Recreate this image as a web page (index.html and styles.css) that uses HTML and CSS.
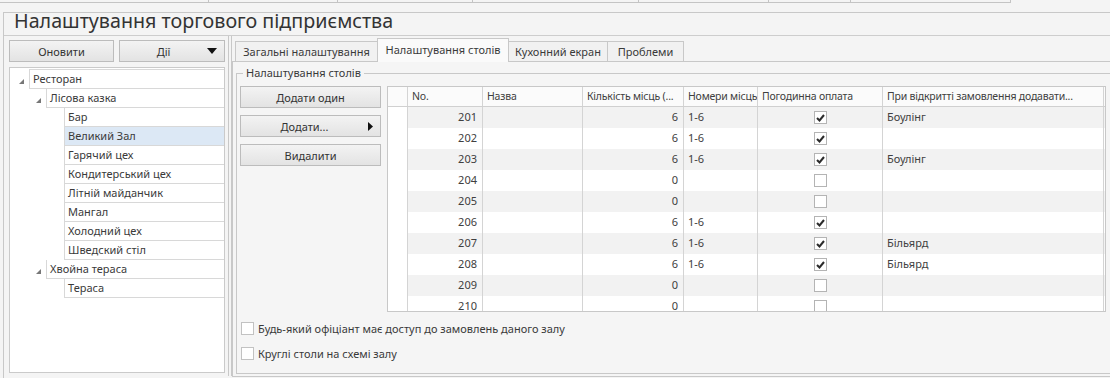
FILE: index.html
```html
<!DOCTYPE html>
<html lang="uk">
<head>
  <meta charset="UTF-8">
  <title>Налаштування торгового підприємства</title>
  <link rel="stylesheet" href="styles.css">
</head>
<body>
  <!-- вкладки вікон зверху (обрізані) -->
  <div class="strip">
    <span></span><span></span><span></span><span></span><span></span><span></span><span></span>
  </div>

  <div class="window">
    <div class="title">Налаштування торгового підприємства</div>

    <div class="main">
      <!-- Ліва панель: дерево залів -->
      <div class="side">
        <div class="side-buttons">
          <div class="btn btn-refresh">Оновити</div>
          <div class="btn btn-menu btn-actions">
            <span class="btn-label">Дії</span>
            <svg width="10" height="6" viewBox="0 0 10 6"><polygon points="0,0 10,0 5,6" fill="#111"/></svg>
          </div>
        </div>

        <div class="tree">
          <div class="node lvl0 first">
            <span class="toggle"><svg width="5" height="5" viewBox="0 0 5 5"><polygon points="5,0 5,5 0,5" fill="#777"/></svg></span>
            <div class="cell">Ресторан</div>
          </div>
          <div class="node lvl1">
            <span class="toggle"><svg width="5" height="5" viewBox="0 0 5 5"><polygon points="5,0 5,5 0,5" fill="#777"/></svg></span>
            <div class="cell">Лісова казка</div>
          </div>
          <div class="node lvl2"><div class="cell">Бар</div></div>
          <div class="node lvl2 sel"><div class="cell">Великий Зал</div></div>
          <div class="node lvl2"><div class="cell">Гарячий цех</div></div>
          <div class="node lvl2"><div class="cell">Кондитерський цех</div></div>
          <div class="node lvl2"><div class="cell">Літній майданчик</div></div>
          <div class="node lvl2"><div class="cell">Мангал</div></div>
          <div class="node lvl2"><div class="cell">Холодний цех</div></div>
          <div class="node lvl2"><div class="cell">Шведский стіл</div></div>
          <div class="node lvl1">
            <span class="toggle"><svg width="5" height="5" viewBox="0 0 5 5"><polygon points="5,0 5,5 0,5" fill="#777"/></svg></span>
            <div class="cell">Хвойна тераса</div>
          </div>
          <div class="node lvl2"><div class="cell">Тераса</div></div>
        </div>
      </div>

      <div class="splitter"></div>

      <!-- Права панель: вкладки -->
      <div class="content">
        <div class="tabs">
          <div class="tab tab-general">Загальні налаштування</div>
          <div class="tab tab-tables active">Налаштування столів</div>
          <div class="tab tab-kitchen">Кухонний екран</div>
          <div class="tab tab-problems">Проблеми</div>
        </div>

        <div class="tabpage">
          <fieldset class="group">
            <legend>Налаштування столів</legend>

            <div class="group-body">
              <div class="actions">
                <div class="btn">Додати один</div>
                <div class="btn btn-menu">
                  <span class="btn-label">Додати...</span>
                  <svg width="5" height="9" viewBox="0 0 5 9"><polygon points="0,0 5,4.5 0,9" fill="#111"/></svg>
                </div>
                <div class="btn">Видалити</div>
              </div>

              <div class="grid" id="grid">
                <div class="row head">
                  <div></div>
                  <div>No.</div>
                  <div>Назва</div>
                  <div>Кількість місць (...</div>
                  <div>Номери місць</div>
                  <div>Погодинна оплата</div>
                  <div>При відкритті замовлення додавати...</div>
                  <div></div>
                </div>
              </div>
            </div>

            <div class="options">
              <label class="option"><span class="box"></span>Будь-який офіціант має доступ до замовлень даного залу</label>
              <label class="option"><span class="box"></span>Круглі столи на схемі залу</label>
            </div>
          </fieldset>
        </div>
      </div>
    </div>
  </div>

  <script>
    // Дані столів
    const tables = [
      { no: 201, seats: 6, nums: '1-6', hourly: true,  add: 'Боулінг' },
      { no: 202, seats: 6, nums: '1-6', hourly: true,  add: '' },
      { no: 203, seats: 6, nums: '1-6', hourly: true,  add: 'Боулінг' },
      { no: 204, seats: 0, nums: '',    hourly: false, add: '' },
      { no: 205, seats: 0, nums: '',    hourly: false, add: '' },
      { no: 206, seats: 6, nums: '1-6', hourly: true,  add: '' },
      { no: 207, seats: 6, nums: '1-6', hourly: true,  add: 'Більярд' },
      { no: 208, seats: 6, nums: '1-6', hourly: true,  add: 'Більярд' },
      { no: 209, seats: 0, nums: '',    hourly: false, add: '' },
      { no: 210, seats: 0, nums: '',    hourly: false, add: '' }
    ];

    const checkSvg = '<svg width="9" height="8" viewBox="0 0 9 8"><polyline points="1,4 3.5,6.5 8,1" fill="none" stroke="#2b2b2b" stroke-width="2"/></svg>';

    const grid = document.getElementById('grid');
    tables.forEach(t => {
      const row = document.createElement('div');
      row.className = 'row';
      row.innerHTML =
        '<div></div>' +
        '<div class="num">' + t.no + '</div>' +
        '<div></div>' +
        '<div class="num">' + t.seats + '</div>' +
        '<div>' + t.nums + '</div>' +
        '<div class="chk"><span class="box">' + (t.hourly ? checkSvg : '') + '</span></div>' +
        '<div>' + t.add + '</div>' +
        '<div></div>';
      grid.appendChild(row);
    });
  </script>
</body>
</html>
```

FILE: styles.css
```css
* {
  box-sizing: border-box;
}

body {
  margin: 0;
  width: 1110px;
  height: 378px;
  overflow: hidden;
  background: #f4f4f4;
  font-family: 'Noto Sans', Tahoma, sans-serif;
  font-size: 11px;
  color: #3a3a3a;
}

.strip {
  display: grid;
  grid-template-columns: 209px 129px 135px 166px 130px 82px 160px;
  width: 1011px;
  height: 3px;
  border-bottom: 1px solid #c4c4c4;
}

.strip span {
  border-right: 1px solid #c4c4c4;
}

.window {
  margin: 9px 0 0 3px;
  width: 1112px;
  height: 370px;
  border-left: 1px solid #c8c8c8;
  border-top: 1px solid #c8c8c8;
}

.title {
  height: 23px;
  padding-left: 10px;
  border-bottom: 1px solid #cdcdcd;
  font-family: 'Noto Sans', sans-serif;
  font-size: 19.7px;
  line-height: 15px;
  color: #333;
  white-space: nowrap;
}

.main {
  display: flex;
  height: 340px;
}

/* ---- ліва панель ---- */

.side {
  width: 225px;
  flex: none;
  padding: 4px 3px 0 5px;
  border-right: 1px solid #c8c8c8;
}

.side-buttons {
  display: flex;
  gap: 5px;
}

.btn {
  display: flex;
  align-items: center;
  justify-content: center;
  height: 22px;
  border: 1px solid #bcbcbc;
  background: linear-gradient(#f3f3f3, #e3e3e3);
  color: #333;
  white-space: nowrap;
}

.btn-refresh {
  width: 105px;
}

.btn-actions {
  width: 106px;
}

.btn-menu {
  padding-right: 7px;
}

.btn-label {
  flex: 1;
  text-align: center;
}

.tree {
  margin-top: 5px;
  height: 306px;
  padding-top: 1px;
  border: 1px solid #cacaca;
  background: #fff;
}

.node {
  display: flex;
  height: 19px;
}

.node.first {
  height: 20px;
}

.node .cell {
  flex: 1;
  padding-left: 3px;
  border-left: 1px solid #d8d8d8;
  border-bottom: 1px solid #d8d8d8;
  line-height: 18px;
  white-space: nowrap;
}

.node.first .cell {
  border-top: 1px solid #d8d8d8;
}

.node.sel .cell {
  background: #dce8f5;
}

.toggle {
  display: flex;
  align-items: center;
  width: 10px;
  padding-top: 4px;
}

.lvl0 {
  padding-left: 9px;
}

.lvl1 {
  padding-left: 26px;
}

.lvl2 {
  padding-left: 54px;
}

.splitter {
  width: 3px;
  flex: none;
  border-right: 1px solid #c8c8c8;
}

/* ---- права панель ---- */

.content {
  flex: 1;
}

.tabs {
  display: flex;
  align-items: flex-end;
  height: 25px;
  padding-left: 3px;
}

.tab {
  height: 20px;
  border: 1px solid #c8c8c8;
  border-bottom: none;
  background: #f1f1f1;
  text-align: center;
  line-height: 19px;
  white-space: nowrap;
}

.tab + .tab {
  margin-left: -1px;
}

.tab.active {
  position: relative;
  height: 24px;
  margin-bottom: -1px;
  background: #fafafa;
  line-height: 21px;
}

.tab-general {
  width: 143px;
}

.tab-tables {
  width: 132px;
}

.tab-kitchen {
  width: 100px;
}

.tab-problems {
  width: 77px;
}

.tabpage {
  height: 316px;
  padding: 4px 0 0 3px;
  border: 1px solid #c8c8c8;
  background: #f5f5f5;
}

.group {
  margin: 0;
  min-width: 0;
  height: 308px;
  padding: 6px 0 0 3px;
  border: 1px solid #c8c8c8;
}

.group legend {
  margin-left: 3px;
  padding: 0 3px;
  line-height: 14px;
}

.group-body {
  display: flex;
  gap: 6px;
}

.actions {
  display: flex;
  flex-direction: column;
  gap: 7px;
  width: 141px;
}

.grid {
  width: 719px;
  height: 226px;
  overflow: hidden;
  border: 1px solid #c8c8c8;
  background: #fff;
  color: #404040;
}

.row {
  display: grid;
  grid-template-columns: 19px 75px 100px 101px 74px 125px 221px 1fr;
  height: 21px;
}

.row > div {
  padding: 4px 4px 0;
  line-height: 11px;
  white-space: nowrap;
  overflow: hidden;
}

.row > div + div {
  border-left: 1px solid #d4d4d4;
}

.row.head {
  height: 20px;
  border-bottom: 1px solid #d0d0d0;
  background: #fbfbfb;
  font-size: 10.5px;
  letter-spacing: -0.2px;
}

.row.head > div {
  padding-top: 0;
  line-height: 19px;
}

.row:nth-child(even) > div + div {
  background: #f2f2f2;
}

.row .num {
  text-align: right;
  padding-right: 5px;
}

.row .chk {
  display: flex;
  align-items: center;
  justify-content: center;
  padding: 0;
}

.box {
  display: flex;
  align-items: center;
  justify-content: center;
  width: 13px;
  height: 13px;
  flex: none;
  border: 1px solid #b4b4b4;
  background: #fff;
}

.options {
  margin-top: 4px;
}

.option {
  display: flex;
  align-items: center;
  gap: 4px;
  height: 25px;
  padding-left: 1px;
  color: #3a3a3a;
}

.option .box {
  border-color: #c2c2c2;
}
```
